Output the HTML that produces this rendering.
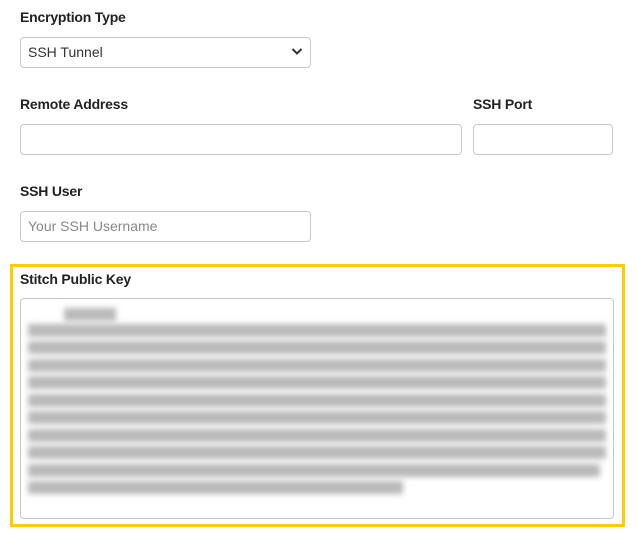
<!DOCTYPE html>
<html><head><style>
body{margin:0;width:637px;height:533px;background:#fff;font-family:"Liberation Sans",sans-serif;position:relative;overflow:hidden;color:#222}
.l{position:absolute;font-weight:bold;font-size:14px;color:#222;letter-spacing:-0.2px}
.box{position:absolute;border:1px solid #c8c8c8;border-radius:4px;background:#fff;box-sizing:border-box}
.t{position:absolute;font-size:14px}
.bar{position:absolute;height:13px;background:#a8a8a8;filter:blur(3px);opacity:.8}
</style></head><body>
<div class="l" style="left:20px;top:9px">Encryption Type</div>
<div class="box" style="left:20px;top:37px;width:291px;height:31px"></div>
<div class="t" style="left:28px;top:44px;color:#333">SSH Tunnel</div>
<svg style="position:absolute;left:291px;top:47px" width="12" height="9"><path d="M1.5 2 L6 6.5 L10.5 2" stroke="#333" stroke-width="2" fill="none"/></svg>
<div class="l" style="left:20px;top:96px">Remote Address</div>
<div class="l" style="left:473px;top:96px">SSH Port</div>
<div class="box" style="left:20px;top:124px;width:442px;height:31px"></div>
<div class="box" style="left:473px;top:124px;width:140px;height:31px"></div>
<div class="l" style="left:20px;top:183px">SSH User</div>
<div class="box" style="left:20px;top:211px;width:291px;height:31px"></div>
<div class="t" style="left:28px;top:218px;color:#888">Your SSH Username</div>
<div style="position:absolute;left:10px;top:264px;width:615px;height:263px;border:3px solid #ffcc00;box-sizing:border-box"></div>
<div class="l" style="left:20px;top:271px">Stitch Public Key</div>
<div class="box" style="left:20px;top:298px;width:594px;height:221px"></div>
<div class="bar" style="left:64px;top:308px;width:52px"></div>
<div class="bar" style="left:28px;top:324px;width:578px"></div>
<div class="bar" style="left:28px;top:341px;width:578px"></div>
<div class="bar" style="left:28px;top:359px;width:578px"></div>
<div class="bar" style="left:28px;top:376px;width:578px"></div>
<div class="bar" style="left:28px;top:394px;width:578px"></div>
<div class="bar" style="left:28px;top:411px;width:578px"></div>
<div class="bar" style="left:28px;top:429px;width:578px"></div>
<div class="bar" style="left:28px;top:446px;width:578px"></div>
<div class="bar" style="left:28px;top:464px;width:572px"></div>
<div class="bar" style="left:28px;top:481px;width:375px"></div>
</body></html>
